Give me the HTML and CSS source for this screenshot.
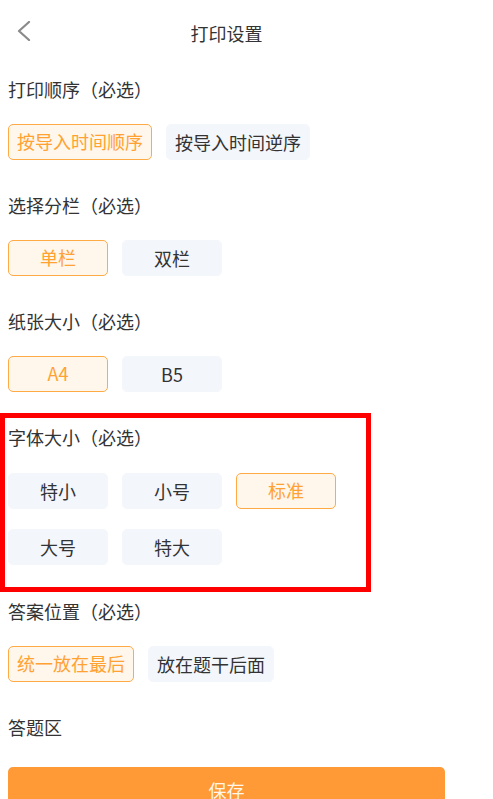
FILE: index.html
```html
<!DOCTYPE html>
<html lang="zh-CN">
<head>
<meta charset="utf-8">
<title>打印设置</title>
<link rel="stylesheet" href="styles.css">
</head>
<body>
<div class="page">
  <header class="header">
    <svg class="back" width="14" height="20" viewBox="0 0 14 20"><polyline points="12,1 2,10 12,19" fill="none" stroke="#8a8a8a" stroke-width="2.2" stroke-linecap="round" stroke-linejoin="round"/></svg>
    <div class="title">打印设置</div>
  </header>
  <main class="content">
    <section class="section">
      <div class="label">打印顺序（必选）</div>
      <div class="options">
        <div class="opt auto selected">按导入时间顺序</div>
        <div class="opt auto">按导入时间逆序</div>
      </div>
    </section>
    <section class="section">
      <div class="label">选择分栏（必选）</div>
      <div class="options">
        <div class="opt selected">单栏</div>
        <div class="opt">双栏</div>
      </div>
    </section>
    <section class="section">
      <div class="label">纸张大小（必选）</div>
      <div class="options">
        <div class="opt selected">A4</div>
        <div class="opt">B5</div>
      </div>
    </section>
    <section class="section highlight">
      <div class="label">字体大小（必选）</div>
      <div class="options grid">
        <div class="opt">特小</div>
        <div class="opt">小号</div>
        <div class="opt selected">标准</div>
        <div class="opt">大号</div>
        <div class="opt">特大</div>
      </div>
      <div class="mark"></div>
    </section>
    <section class="section">
      <div class="label">答案位置（必选）</div>
      <div class="options">
        <div class="opt auto selected">统一放在最后</div>
        <div class="opt auto">放在题干后面</div>
      </div>
    </section>
    <section class="section last">
      <div class="label">答题区</div>
    </section>
    <button class="save">保存</button>
  </main>
</div>
</body>
</html>
```

FILE: styles.css
```css
* { box-sizing: border-box; }
html, body { margin: 0; padding: 0; background: #fff; }
body {
  font-family: "Noto Sans CJK SC", "Noto Sans", sans-serif;
  color: #333;
  overflow: hidden;
  height: 799px;
}
.page { width: 453px; }
.header {
  height: 66px;
  display: flex;
  align-items: center;
  justify-content: center;
  position: relative;
}
.back { position: absolute; left: 17px; top: 21px; }
.title { font-size: 18px; line-height: 24px; color: #333; }
.content { padding: 11px 8px 0; }
.section { margin-bottom: 33px; position: relative; }
.section.highlight { margin-bottom: 34px; }
.section.last { margin-bottom: 28px; }
.label { font-size: 18px; line-height: 24px; color: #333; }
.options { display: flex; gap: 14px; margin-top: 23px; }
.options.grid { display: grid; grid-template-columns: repeat(3, 100px); gap: 20px 14px; margin-top: 24px; }
.opt {
  width: 100px;
  height: 36px;
  border-radius: 5px;
  background: #f3f6fb;
  border: 1px solid #f3f6fb;
  font-size: 18px;
  line-height: 34px;
  text-align: center;
  color: #333;
}
.opt.auto { width: auto; padding: 0 8px; }
.opt.selected {
  background: #fff6ec;
  border: 1.5px solid #ffab45;
  color: #ffa232;
  line-height: 33px;
}
.mark {
  position: absolute;
  left: -8px;
  top: -12px;
  width: 371px;
  height: 179px;
  border: 5px solid #ff0000;
  pointer-events: none;
}
.save {
  display: block;
  width: 437px;
  height: 46px;
  border: none;
  border-radius: 5px;
  background: #ff9a36;
  color: #fff6ea;
  font-family: "Noto Sans CJK SC", "Noto Sans", sans-serif;
  font-size: 18px;
  padding: 0;
}
```
